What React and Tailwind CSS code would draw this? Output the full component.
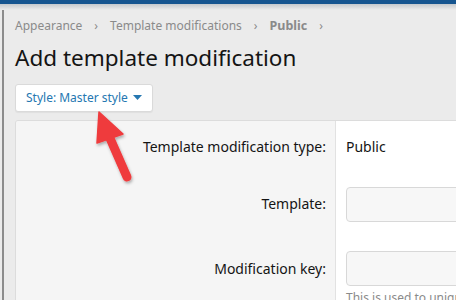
import React from 'react';

const font = { fontFamily: '"Noto Sans", "Open Sans", Arial, sans-serif' };

const Row = ({ label, children, className = '' }) => (
  <div className={`flex ${className}`}>
    <div className="w-[319px] shrink-0 bg-[#f5f5f5] pr-[9px] text-right text-[14px] leading-[19px] text-[#141414]">
      {label}
    </div>
    <div className="flex-1 border-l border-[#e2e2e2] bg-white pl-[10px]">{children}</div>
  </div>
);

const App = () => {
  return (
    <div className="relative h-[300px] w-[456px] overflow-hidden bg-[#ebebeb]" style={font}>
      <div className="h-[4px] bg-[#15548f]" />
      <div className="h-[6px] bg-gradient-to-b from-[#c4c8cc] to-[#ebebeb]" />
      <div className="absolute left-[2px] top-[10px] bottom-0 w-[2px] bg-[#8c8c8c]" />

      <div className="pl-[15px]">
        <nav className="mt-[7px] flex items-center text-[12px] text-[#8a8a8a]">
          <span>Appearance</span>
          <span className="mx-[12px] text-[12px]">›</span>
          <span>Template modifications</span>
          <span className="mx-[12px] text-[12px]">›</span>
          <span className="text-[12.5px] font-bold">Public</span>
          <span className="mx-[12px] text-[12px]">›</span>
        </nav>

        <h1 className="mt-[7px] whitespace-nowrap text-[22.5px] leading-[30px] text-[#141414]">
          Add template modification
        </h1>

        <button className="mt-[11px] flex h-[28px] items-center rounded-[3px] border border-[#dadada] bg-white px-[10px] text-[12px] text-[#2577b1] shadow-[0_1px_1px_rgba(0,0,0,0.05)]">
          Style: Master style
          <svg width="9" height="5" viewBox="0 0 9 5" className="ml-[5px]">
            <path d="M0 0h9L4.5 5z" fill="#2577b1" />
          </svg>
        </button>

        <div className="mt-[8px] w-[520px] overflow-hidden rounded-tl-[3px] border border-[#dcdcdc]">
          <Row label={<div className="pt-[16px] pb-[21px]">Template modification type:</div>}>
            <div className="pt-[16px] text-[14px] leading-[19px] text-[#141414]">Public</div>
          </Row>
          <Row label={<div className="pt-[17px] pb-[28px]">Template:</div>}>
            <div className="mt-[10px] h-[35px] rounded-[4px] border border-[#d8d8d8] bg-[#f7f7f7]" />
          </Row>
          <Row label={<div className="pt-[18px] pb-[30px]">Modification key:</div>}>
            <div className="mt-[10px] h-[35px] rounded-[4px] border border-[#d8d8d8] bg-[#f7f7f7]" />
            <div className="mt-[3px] whitespace-nowrap text-[12px] text-[#8a8a8a]">This is used to uniquely identify</div>
          </Row>
        </div>
      </div>

      <svg className="absolute left-0 top-0" width="456" height="300" viewBox="0 0 456 300">
        <defs>
          <filter id="sh" x="-50%" y="-50%" width="200%" height="200%">
            <feDropShadow dx="1" dy="2" stdDeviation="1.5" floodColor="#000" floodOpacity="0.3" />
          </filter>
        </defs>
        <g filter="url(#sh)">
          <line x1="109" y1="136" x2="127" y2="177" stroke="#ef3b3d" strokeWidth="9" strokeLinecap="round" />
          <path d="M99 112 L123 134 L97 143 Z" fill="#ef3b3d" strokeLinejoin="round" stroke="#ef3b3d" strokeWidth="1.5" />
        </g>
      </svg>
    </div>
  );
};

export default App;
